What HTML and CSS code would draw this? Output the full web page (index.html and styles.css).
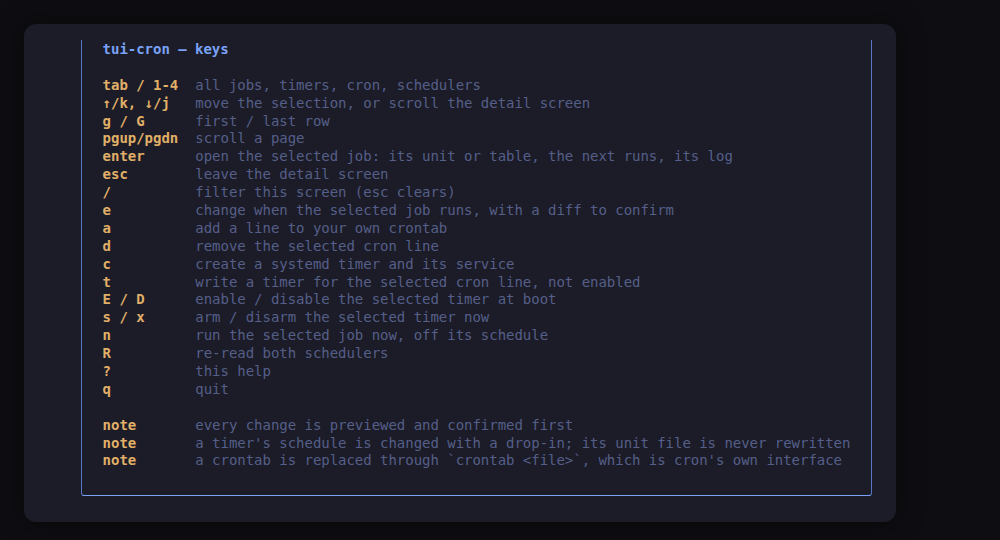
FILE: index.html
```html
<!DOCTYPE html>
<html lang="en">
<head>
<meta charset="utf-8">
<title>tui-cron — keys</title>
<link rel="stylesheet" href="styles.css">
</head>
<body>
<main class="card">
  <section class="box">
    <div class="row title">tui-cron — keys</div>
    <div class="row blank"></div>
    <div class="row"><span class="key">tab / 1-4</span><span class="desc">all jobs, timers, cron, schedulers</span></div>
    <div class="row"><span class="key">↑/k, ↓/j</span><span class="desc">move the selection, or scroll the detail screen</span></div>
    <div class="row"><span class="key">g / G</span><span class="desc">first / last row</span></div>
    <div class="row"><span class="key">pgup/pgdn</span><span class="desc">scroll a page</span></div>
    <div class="row"><span class="key">enter</span><span class="desc">open the selected job: its unit or table, the next runs, its log</span></div>
    <div class="row"><span class="key">esc</span><span class="desc">leave the detail screen</span></div>
    <div class="row"><span class="key">/</span><span class="desc">filter this screen (esc clears)</span></div>
    <div class="row"><span class="key">e</span><span class="desc">change when the selected job runs, with a diff to confirm</span></div>
    <div class="row"><span class="key">a</span><span class="desc">add a line to your own crontab</span></div>
    <div class="row"><span class="key">d</span><span class="desc">remove the selected cron line</span></div>
    <div class="row"><span class="key">c</span><span class="desc">create a systemd timer and its service</span></div>
    <div class="row"><span class="key">t</span><span class="desc">write a timer for the selected cron line, not enabled</span></div>
    <div class="row"><span class="key">E / D</span><span class="desc">enable / disable the selected timer at boot</span></div>
    <div class="row"><span class="key">s / x</span><span class="desc">arm / disarm the selected timer now</span></div>
    <div class="row"><span class="key">n</span><span class="desc">run the selected job now, off its schedule</span></div>
    <div class="row"><span class="key">R</span><span class="desc">re-read both schedulers</span></div>
    <div class="row"><span class="key">?</span><span class="desc">this help</span></div>
    <div class="row"><span class="key">q</span><span class="desc">quit</span></div>
    <div class="row blank"></div>
    <div class="row"><span class="key">note</span><span class="desc">every change is previewed and confirmed first</span></div>
    <div class="row"><span class="key">note</span><span class="desc">a timer's schedule is changed with a drop-in; its unit file is never rewritten</span></div>
    <div class="row"><span class="key">note</span><span class="desc">a crontab is replaced through `crontab &lt;file&gt;`, which is cron's own interface</span></div>
    <div class="row blank"></div>
  </section>
</main>
</body>
</html>
```

FILE: styles.css
```css
html, body {
  margin: 0;
  padding: 0;
}

body {
  background: #0e0e12;
  width: 1000px;
  height: 540px;
  padding: 24px;
  box-sizing: border-box;
  font-family: "DejaVu Sans Mono", monospace;
  font-size: 14px;
}

.card {
  width: 872px;
  height: 498px;
  box-sizing: border-box;
  background: #1b1c27;
  border-radius: 12px;
  padding: 16px 24px 0 57px;
  box-shadow: 0 0 24px 4px rgba(0, 0, 0, 0.35);
}

.box {
  width: 791px;
  height: 456px;
  box-sizing: border-box;
  border-left: 1px solid #5876c4;
  border-right: 1px solid #5876c4;
  border-bottom: 1px solid #7aa2f7;
  border-radius: 0 0 3px 3px;
  padding: 1px 0 0 20.6px;
  letter-spacing: -0.03px;
}

.row {
  display: grid;
  grid-template-columns: 11ch 1fr;
  height: 17.9px;
  line-height: 17.9px;
  white-space: pre;
}

.title {
  display: block;
  color: #7aa2f7;
  font-weight: bold;
}

.key {
  color: #e0af68;
  font-weight: bold;
}

.desc {
  color: #565f89;
}
```
